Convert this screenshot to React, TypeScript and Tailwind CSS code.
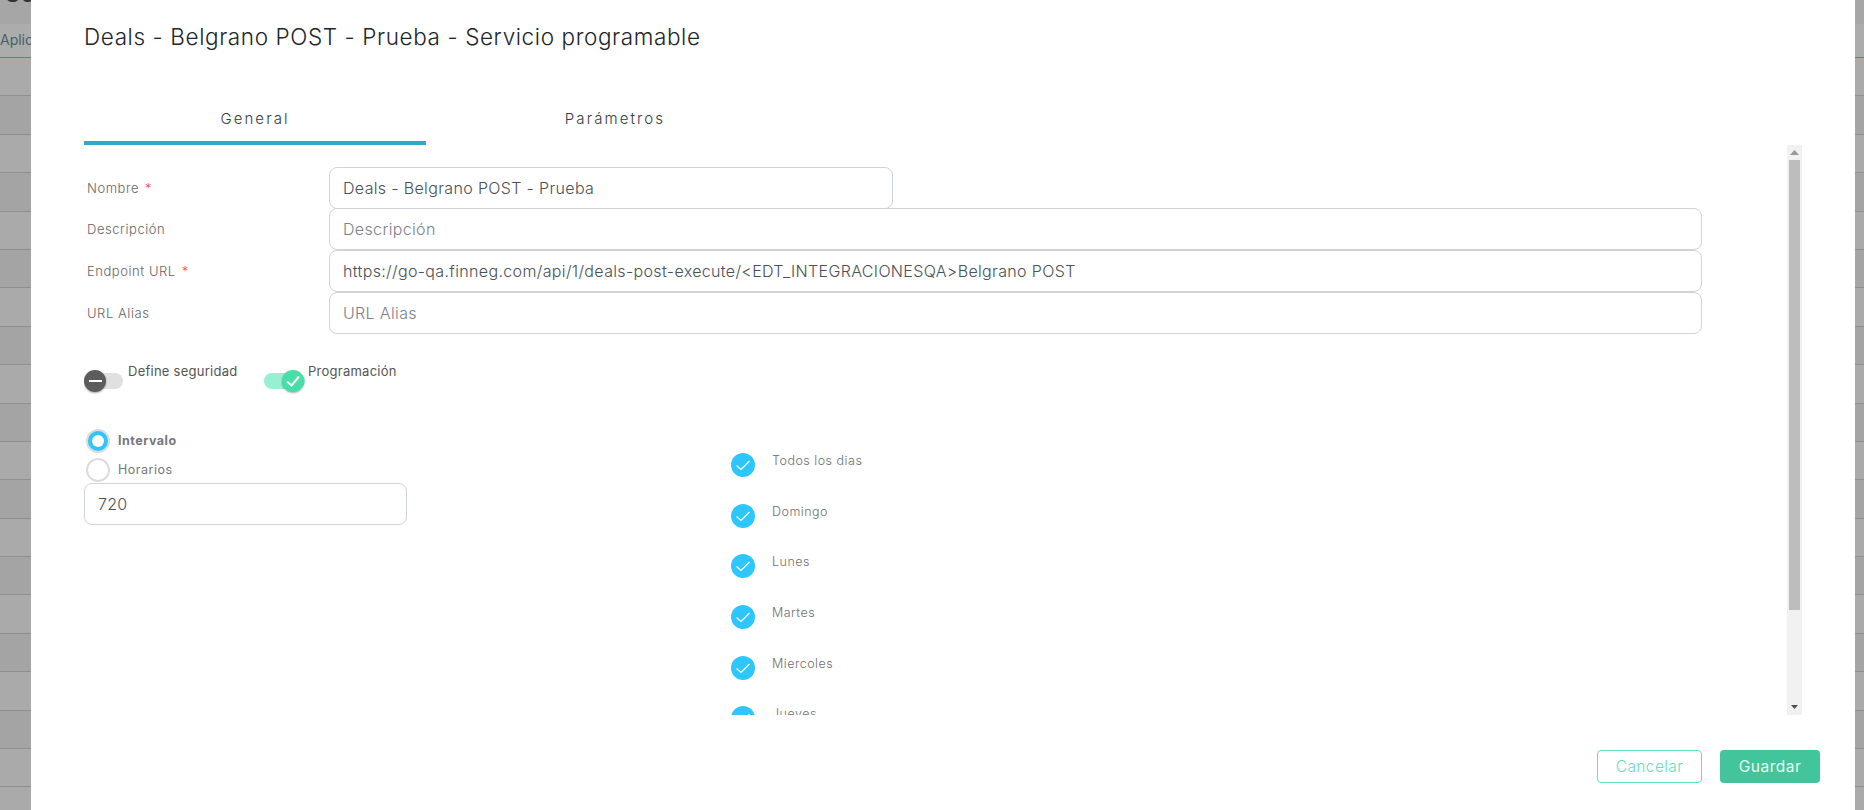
const font = { fontFamily: '"Inter", "Liberation Sans", sans-serif' };

const rows = Array.from({ length: 19 }, (_, i) => i);

function Field({ label, required, value, placeholder, short }: { label: string; required?: boolean; value?: string; placeholder?: string; short?: boolean }) {
  return (
    <div className="flex h-[41.67px] items-center">
      <div className="w-[245px] pl-[3px] pt-[1px] text-[13px] font-light tracking-[0.55px] text-[#666]">
        {label}
        {required && <span className="ml-[6px] text-[#f44]">*</span>}
      </div>
      <div className={`flex h-[42px] items-center rounded-lg border border-[#ced4da] bg-white px-[13px] text-[16px] font-light tracking-[0.35px] ${short ? "w-[564px]" : "w-[1373px]"} ${value ? "text-[#495057]" : "text-[#7b8288]"}`}>
        {value ?? placeholder}
      </div>
    </div>
  );
}

function Toggle({ on, label }: { on?: boolean; label: string }) {
  return (
    <div className="flex w-[180px] items-start">
      <div className={`relative mt-[5px] h-4 shrink-0 rounded-full ${on ? "w-[41px] bg-[#98f0d2]" : "w-[39px] bg-[#e0e0e0]"}`}>
        <span className={`absolute top-[-3px] flex size-[22px] items-center justify-center rounded-full shadow-[0_1px_2px_rgba(0,0,0,0.35)] ${on ? "right-[1px] bg-[#47dfa9]" : "left-0 bg-[#5c5c5c]"}`}>
          {on ? (
            <svg width="16" height="16" viewBox="0 0 16 16" fill="none" stroke="#fff" strokeWidth="2"><path d="M2 8.5 L6.5 12.5 L14 3.5" /></svg>
          ) : (
            <span className="h-[2px] w-[13px] bg-white" />
          )}
        </span>
      </div>
      <span className={`mt-[-5px] text-[13px] leading-[16px] tracking-[0.25px] text-[#555] ${on ? "ml-[3px]" : "ml-[5px]"}`}>{label}</span>
    </div>
  );
}

function Radio({ on, label }: { on?: boolean; label: string }) {
  return (
    <div className="flex h-[29px] items-center pl-[2px]">
      <span className={`flex size-6 items-center justify-center rounded-full border-2 border-[#dcdcdc] ${on ? "bg-[#2dc6ff]" : "bg-white"}`}>
        {on && <span className="size-[12px] rounded-full bg-white" />}
      </span>
      <span className={`ml-2 text-[12.5px] tracking-[0.5px] text-[#777] ${on ? "font-bold text-[#666]" : ""}`}>{label}</span>
    </div>
  );
}

function Day({ label }: { label: string }) {
  return (
    <div className="flex h-[50.6px] shrink-0 items-start">
      <span className="flex size-6 shrink-0 items-center justify-center rounded-full bg-[#2dc6ff]">
        <svg width="16" height="16" viewBox="0 0 16 16" fill="none" stroke="#fff" strokeWidth="1.2"><path d="M1.5 8.5 L6 12.5 L14.5 4" /></svg>
      </span>
      <span className="ml-[17px] mt-[-1px] text-[12.5px] font-light leading-[18px] tracking-[0.5px] text-[#707070]">{label}</span>
    </div>
  );
}

export default function App() {
  return (
    <div className="relative h-[810px] w-[1864px] overflow-hidden bg-[#aaaaaa]" style={font}>
      <div className="h-[24px] overflow-hidden bg-[#a6a6a6]">
        <div className="mt-[-21px] pl-[5px] text-[24px] leading-[29px] text-[#333]">Se</div>
      </div>
      <div className="flex h-[34px] items-center border-b border-[#3f8ea6] bg-[#acacac] pb-[3px] text-[14px] text-[#44616b]">Aplicaciones</div>
      {rows.map((i) => (
        <div key={i} className={`box-border h-[38.4px] border-b border-[#8f8f8f] ${i % 2 ? "bg-[#a4a4a4]" : "bg-[#aaaaaa]"}`} />
      ))}

      <div className="fixed left-[31px] top-0 flex h-[810px] w-[1824px] flex-col bg-white pl-[53px]">
        <h1 className="pt-[22px] text-[22.5px] font-light leading-[30px] tracking-[0.6px] text-[#212529]">
          Deals - Belgrano POST - Prueba - Servicio programable
        </h1>
        <div className="mt-[51px] flex h-[42px] text-[15px] font-light tracking-[2.1px] text-[#343a40]">
          <div className="w-[342px] border-b-4 border-[#2fa9c9] pt-[5px] text-center">General</div>
          <div className="w-[378px] pt-[5px] text-center">Parámetros</div>
        </div>
        <div className="flex h-[570px]">
          <div className="w-[1703px] overflow-hidden pt-[22px]">
            <Field label="Nombre" required value="Deals - Belgrano POST - Prueba" short />
            <Field label="Descripción" placeholder="Descripción" />
            <Field label="Endpoint URL" required value="https://go-qa.finneg.com/api/1/deals-post-execute/<EDT_INTEGRACIONESQA>Belgrano POST" />
            <Field label="URL Alias" placeholder="URL Alias" />
            <div className="mt-[34px] flex">
              <Toggle label="Define seguridad" />
              <Toggle on label="Programación" />
            </div>
            <div className="mt-[38px] flex">
              <div className="w-[323px]">
                <Radio on label="Intervalo" />
                <Radio label="Horarios" />
                <div className="mt-[-2px] flex h-[42px] items-center rounded-lg border border-[#ced4da] px-[13px] text-[16px] font-light tracking-[0.3px] text-[#495057]">720</div>
              </div>
              <div className="ml-[324px] mt-[26.5px] flex flex-col">
                {["Todos los dias", "Domingo", "Lunes", "Martes", "Miercoles", "Jueves"].map((d) => (
                  <Day key={d} label={d} />
                ))}
              </div>
            </div>
          </div>
          <div className="flex w-[15px] flex-col items-center bg-[#f1f1f1]">
            <svg className="my-[5px] shrink-0" width="9" height="5" viewBox="0 0 9 5"><path d="M4.5 0 L9 5 H0 Z" fill="#999" /></svg>
            <div className="h-[450px] w-[11px] bg-[#bdbdbd]" />
            <div className="flex-1" />
            <svg className="my-[6px] shrink-0" width="7" height="4" viewBox="0 0 7 4"><path d="M0 0 H7 L3.5 4 Z" fill="#505050" /></svg>
          </div>
        </div>
        <div className="mt-[35px] flex justify-end gap-[18px] pr-[35px]">
          <button className="h-[33px] w-[105px] rounded border border-[#5be5b9] bg-white text-[15.5px] font-light tracking-[0.4px] text-[#5be5b9]">Cancelar</button>
          <button className="h-[33px] w-[100px] rounded bg-[#43c59b] text-[15.5px] tracking-[0.5px] text-[#e8f8f2]">Guardar</button>
        </div>
      </div>
    </div>
  );
}
